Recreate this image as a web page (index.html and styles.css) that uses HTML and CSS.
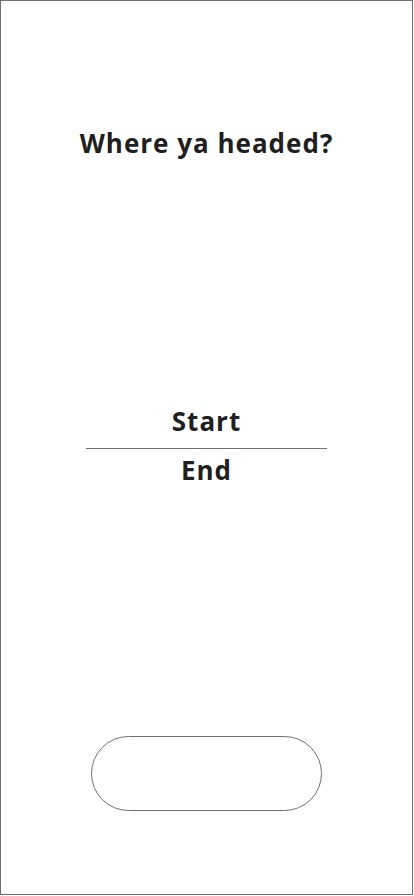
FILE: index.html
```html
<!DOCTYPE html>
<html>
<head>
<meta charset="utf-8">
<link rel="stylesheet" href="styles.css">
</head>
<body>
<div class="screen">
  <h1 class="title">Where ya headed?</h1>
  <div class="route">
    <div class="field">Start</div>
    <div class="divider"></div>
    <div class="field">End</div>
  </div>
  <button class="go" type="button"></button>
</div>
</body>
</html>
```
FILE: styles.css
```css
html, body {
  margin: 0;
  padding: 0;
  background: #ffffff;
}
.screen {
  box-sizing: border-box;
  width: 413px;
  height: 895px;
  border: 1px solid #707070;
  display: flex;
  flex-direction: column;
  align-items: center;
  font-family: "Open Sans", "Liberation Sans", sans-serif;
  color: #1f1f1f;
}
.title {
  margin: 124px 0 0 0;
  font-size: 26px;
  line-height: 36px;
  font-weight: 700;
  letter-spacing: 1px;
}
.route {
  margin-top: 242px;
  display: flex;
  flex-direction: column;
  align-items: center;
}
.field {
  font-size: 26px;
  line-height: 36px;
  font-weight: 700;
  letter-spacing: 1px;
}
.divider {
  width: 241px;
  height: 1px;
  background: #707070;
  margin: 9px 0 3px 0;
}
.go {
  margin-top: 248px;
  width: 231px;
  height: 75px;
  border: 1px solid #707070;
  border-radius: 38px;
  background: #ffffff;
}
```
